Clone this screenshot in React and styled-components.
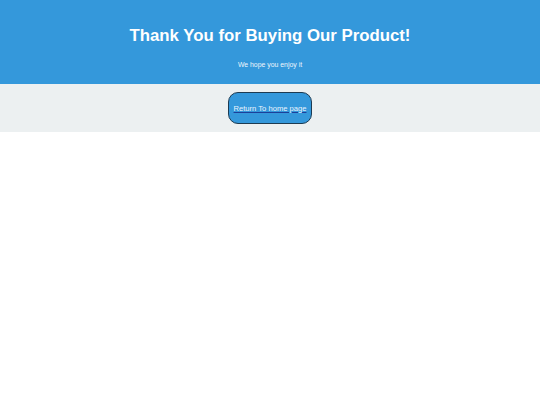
import styled, { createGlobalStyle } from 'styled-components';

const GlobalStyle = createGlobalStyle`
  body {
    margin: 0;
    font-family: "Liberation Sans", Arial, sans-serif;
    background: #fff;
  }
`;

const Header = styled.header`
  background-color: #3498db;
  height: 84px;
  display: flex;
  flex-direction: column;
  align-items: center;
  color: #fff;
  box-sizing: border-box;
  padding-top: 26px;
`;

const Title = styled.h1`
  margin: 0;
  font-size: 16.8px;
  font-weight: bold;
  line-height: 20px;
`;

const Subtitle = styled.p`
  margin: 14px 0 0;
  font-size: 6.9px;
  line-height: 9px;
  color: #eef6fc;
`;

const Band = styled.section`
  background-color: #ecf0f1;
  height: 48px;
  display: flex;
  align-items: center;
  justify-content: center;
`;

const Button = styled.button`
  width: 84px;
  height: 32px;
  padding: 0;
  background-color: #3498db;
  border: 1px solid #1d3b52;
  border-radius: 10px;
  display: flex;
  align-items: center;
  justify-content: center;
  cursor: pointer;
`;

const Link = styled.a`
  font-family: "Liberation Sans", Arial, sans-serif;
  font-size: 7.6px;
  color: #eaf4fd;
  text-decoration: underline;
  text-decoration-color: #1c3f9a;
  white-space: nowrap;
`;

export default function App() {
  return (
    <>
      <GlobalStyle />
      <Header>
        <Title>Thank You for Buying Our Product!</Title>
        <Subtitle>We hope you enjoy it</Subtitle>
      </Header>
      <Band>
        <Button>
          <Link href="#">Return To home page</Link>
        </Button>
      </Band>
    </>
  );
}
